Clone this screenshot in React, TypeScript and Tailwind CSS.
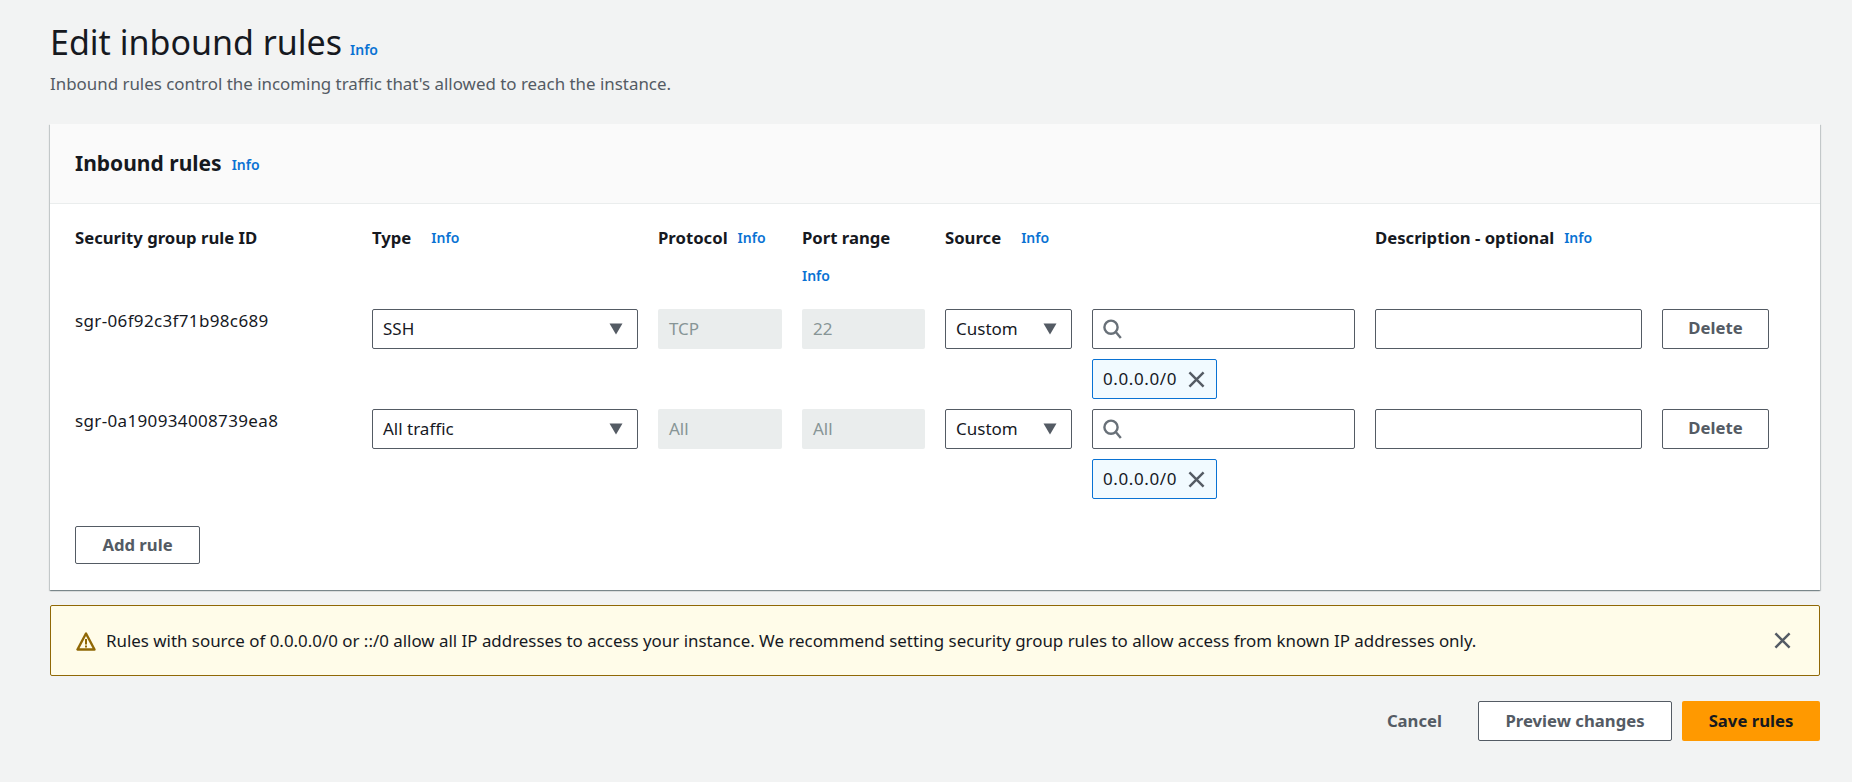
import React from 'react';

const gridCols = 'grid grid-cols-[277px_266px_124px_123px_127px_263px_267px_107px] gap-x-5';

function Info({ className = '' }: { className?: string }) {
  return <a className={`text-[14px] leading-5 font-semibold text-[#0972d3] ${className}`}>Info</a>;
}

function Caret() {
  return (
    <svg width="14" height="12" viewBox="0 0 14 12" className="shrink-0">
      <path d="M0.5 0.5h13L7 11.5z" fill="#545b64" />
    </svg>
  );
}

function SearchIcon() {
  return (
    <svg width="19" height="20" viewBox="0 0 19 20" fill="none" stroke="#687078" strokeWidth="2.4">
      <circle cx="8" cy="8.2" r="6.6" />
      <path d="M12.8 13l5 6" />
    </svg>
  );
}

function CloseIcon({ size = 17 }: { size?: number }) {
  return (
    <svg width={size} height={size} viewBox="0 0 18 18" fill="none" stroke="#545b64" strokeWidth="2.6">
      <path d="M1.5 1.5l15 15M16.5 1.5l-15 15" />
    </svg>
  );
}

function WarningIcon() {
  return (
    <svg width="20" height="20" viewBox="0 0 20 20">
      <path d="M10 2.5L1.5 18.5h17z" fill="none" stroke="#906806" strokeWidth="2.4" strokeLinejoin="round" />
      <path d="M9 8h2v5.5H9zM9 14.5h2v2H9z" fill="#906806" />
    </svg>
  );
}

function SelectBox({ label }: { label: string }) {
  return (
    <div className="h-10 flex items-center justify-between border border-[#545b64] rounded-[2px] bg-white pl-[10px] pr-[14px] text-[17px] text-[#16191f]">
      <span>{label}</span>
      <Caret />
    </div>
  );
}

function Disabled({ value }: { value: string }) {
  return (
    <div className="h-10 flex items-center pl-[11px] rounded-[2px] bg-[#eaeded] text-[17px] text-[#879596]">{value}</div>
  );
}

function Row({ id, type, protocol, port }: { id: string; type: string; protocol: string; port: string }) {
  return (
    <div className={`${gridCols} items-start mb-[10px]`}>
      <div className="text-[17px] leading-5 tracking-[0.35px] text-[#16191f] pt-[2px]">{id}</div>
      <SelectBox label={type} />
      <Disabled value={protocol} />
      <Disabled value={port} />
      <SelectBox label="Custom" />
      <div className="flex flex-col gap-[10px] items-start">
        <div className="w-full h-10 flex items-center pl-[10px] border border-[#545b64] rounded-[2px] bg-white">
          <SearchIcon />
        </div>
        <div className="h-10 w-[125px] flex items-center justify-between pl-[10px] pr-[11px] border border-[#0972d3] rounded-[2px] bg-[#f1faff] text-[17px] tracking-[0.6px] text-[#16191f]">
          <span>0.0.0.0/0</span>
          <CloseIcon />
        </div>
      </div>
      <div className="h-10 border border-[#545b64] rounded-[2px] bg-white" />
      <button className="h-10 pb-[2px] border border-[#545b64] rounded-[2px] bg-white text-[16.7px] font-bold text-[#545b64]">Delete</button>
    </div>
  );
}

export default function App() {
  return (
    <div className="min-h-[782px] bg-[#f2f3f3] pl-[50px] pr-[32px] pt-[19px] font-['Noto_Sans',sans-serif]">
      {/* Page heading */}
      <div className="flex items-baseline gap-[8px]">
        <h1 className="text-[34px] leading-[46px] font-normal text-[#16191f]">Edit inbound rules</h1>
        <Info />
      </div>
      <p className="text-[16.9px] leading-6 text-[#545b64] mt-[7px]">Inbound rules control the incoming traffic that's allowed to reach the instance.</p>

      {/* Rules panel */}
      <div className="mt-[28px] bg-white shadow-[0_1px_1px_0_rgba(0,28,36,0.3),1px_1px_1px_0_rgba(0,28,36,0.15),-1px_1px_1px_0_rgba(0,28,36,0.15)]">
        <div className="h-[80px] flex items-center gap-[10px] px-[25px] bg-[#fafafa] border-b border-[#eaeded]">
          <h2 className="text-[21px] font-bold text-[#16191f]">Inbound rules</h2>
          <Info className="mt-[3px]" />
        </div>
        <div className="px-[25px] pt-[24px] pb-[26px]">
          <div className={`${gridCols} h-[81px] text-[16.7px] leading-5 font-bold text-[#16191f]`}>
            <div>Security group rule ID</div>
            <div className="flex gap-5"><span>Type</span><Info /></div>
            <div className="flex gap-[10px]"><span>Protocol</span><Info /></div>
            <div className="flex flex-col gap-[18px] items-start"><span>Port range</span><Info /></div>
            <div className="flex gap-5"><span>Source</span><Info /></div>
            <div />
            <div className="col-span-2 flex gap-[10px]"><span>Description - optional</span><Info /></div>
          </div>
          <Row id="sgr-06f92c3f71b98c689" type="SSH" protocol="TCP" port="22" />
          <Row id="sgr-0a190934008739ea8" type="All traffic" protocol="All" port="All" />
          <button className="mt-[17px] h-[38px] w-[125px] pb-[1px] border border-[#545b64] rounded-[2px] bg-white text-[16.7px] font-bold text-[#545b64]">Add rule</button>
        </div>
      </div>

      {/* Warning */}
      <div className="mt-[15px] h-[71px] flex items-center gap-[10px] pl-[25px] pr-[28px] border border-[#906806] rounded-[2px] bg-[#fffce9] text-[16.9px] text-[#16191f]">
        <WarningIcon />
        <span className="flex-1">Rules with source of 0.0.0.0/0 or ::/0 allow all IP addresses to access your instance. We recommend setting security group rules to allow access from known IP addresses only.</span>
        <CloseIcon />
      </div>

      {/* Actions */}
      <div className="mt-[25px] flex justify-end items-center">
        <button className="text-[16.7px] font-bold text-[#545b64] mr-[36px]">Cancel</button>
        <button className="h-10 w-[194px] border border-[#545b64] rounded-[2px] bg-white text-[16.7px] font-bold text-[#545b64] mr-[10px]">Preview changes</button>
        <button className="h-10 w-[138px] rounded-[2px] bg-[#ff9900] text-[16.7px] font-bold text-[#16191f]">Save rules</button>
      </div>
    </div>
  );
}
